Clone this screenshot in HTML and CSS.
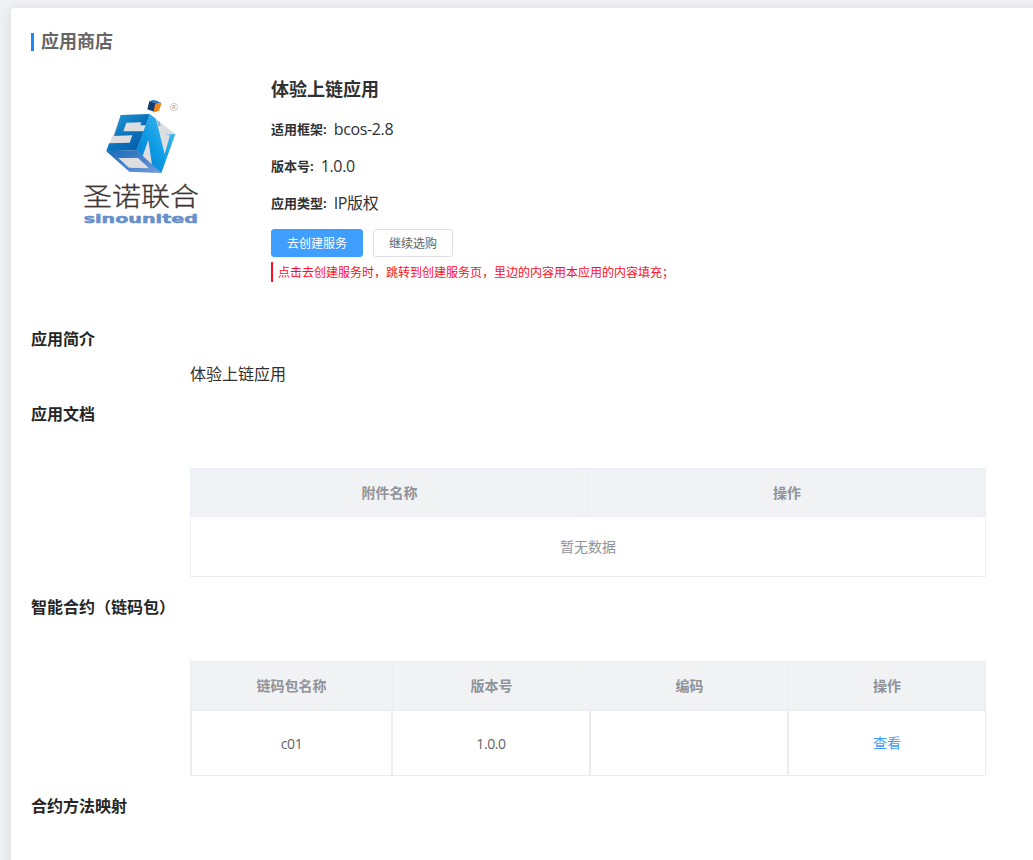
FILE: index.html
```html
<!DOCTYPE html>
<html lang="zh-CN">
<head>
<meta charset="utf-8">
<title>应用商店</title>
<link rel="stylesheet" href="styles.css">
</head>
<body>
<main class="card">
  <h1 class="page-title">应用商店</h1>
  <section class="app">
    <div class="app-logo">
      <svg width="140" height="145" viewBox="0 0 420 435" role="img" aria-label="sinounited">
        <defs>
          <linearGradient id="left" x1="0" y1="0" x2="1" y2="1">
            <stop offset="0" stop-color="#2aa0dc"/><stop offset=".5" stop-color="#0a73bd"/><stop offset="1" stop-color="#0757a0"/>
          </linearGradient>
          <linearGradient id="right" x1="1" y1="0" x2="0" y2="1">
            <stop offset="0" stop-color="#58c5f2"/><stop offset=".55" stop-color="#0e9be4"/><stop offset="1" stop-color="#0676ca"/>
          </linearGradient>
          <linearGradient id="base" x1="0" y1="0" x2="1" y2="1">
            <stop offset="0" stop-color="#1769b8"/><stop offset="1" stop-color="#739bdc"/>
          </linearGradient>
        </defs>
        <path fill="#dedee0" d="M154 75L239 72L262 91L316 132L274 249L178 245L109 184Z"/>
        <path fill="url(#left)" d="M152 75L239 72L228 106L211 106L214 97L169 98L160 124L222 124L200 181L109 184L117 160L179 158L187 136L132 138Z"/>
        <path fill="url(#base)" d="M109 184L200 181L274 249L178 245ZM145 204L177 233L237 235L204 204Z" fill-rule="evenodd"/>
        <path fill="url(#right)" d="M239 72L258 86L284 192L300 136L284 134L316 132L274 249L246 224L235 150L218 198L200 181Z"/>
        <path fill="#8db7dc" d="M262 91L269 95L273 107L265 109Z"/>
        <path fill="#123d75" d="M238 34L264 32L254 66L232 58Z"/>
        <path fill="#2f75b7" d="M238 34L250 29L274 39L257 41Z"/>
        <path fill="#f08418" d="M256 41L275 38L267 62L249 68Z"/>
        <circle cx="312" cy="51" r="11" fill="none" stroke="#aaa" stroke-width="1.8"/>
        <text class="logo-mark" x="307" y="57">R</text>
        <text class="logo-cn" transform="translate(39 348) scale(1 .9)" textLength="348">圣诺联合</text>
        <text class="logo-en" x="41" y="399" textLength="343" lengthAdjust="spacingAndGlyphs">sinounited</text>
      </svg>
    </div>
    <div class="app-info">
      <h2 class="app-name">体验上链应用</h2>
      <p class="field"><span class="field-label">适用框架:</span><span class="field-value">bcos-2.8</span></p>
      <p class="field"><span class="field-label">版本号:</span><span class="field-value">1.0.0</span></p>
      <p class="field"><span class="field-label">应用类型:</span><span class="field-value">IP版权</span></p>
      <div class="actions">
        <button class="btn btn-primary">去创建服务</button>
        <button class="btn">继续选购</button>
      </div>
      <p class="note">点击去创建服务时，跳转到创建服务页，里边的内容用本应用的内容填充；</p>
    </div>
  </section>

  <h3 class="heading">应用简介</h3>
  <p class="intro">体验上链应用</p>

  <h3 class="heading">应用文档</h3>
  <div class="table docs">
    <div class="row head"><div class="cell">附件名称</div><div class="cell">操作</div></div>
    <div class="empty">暂无数据</div>
  </div>

  <h3 class="heading">智能合约（链码包）</h3>
  <div class="table contracts">
    <div class="row head"><div class="cell">链码包名称</div><div class="cell">版本号</div><div class="cell">编码</div><div class="cell">操作</div></div>
    <div class="row body"><div class="cell">c01</div><div class="cell">1.0.0</div><div class="cell"></div><div class="cell"><a class="link">查看</a></div></div>
  </div>

  <h3 class="heading">合约方法映射</h3>
</main>
</body>
</html>
```
FILE: styles.css
```css
* { box-sizing: border-box; }
html, body { height: 100%; }
body {
  margin: 0;
  padding: 8px 0 0 11px;
  overflow: hidden;
  background: #eff0f4;
  color: #303133;
  font-family: "Open Sans", "Noto Sans CJK SC", sans-serif;
  font-size: 16px;
}
h1, h2, h3, p { margin: 0; }
.card {
  width: 1040px;
  height: 880px;
  padding: 25px 0 0 20px;
  background: #fff;
  border-radius: 4px;
  box-shadow: 0 2px 12px rgba(0, 0, 0, .1);
}
.page-title {
  height: 18px;
  padding-left: 7px;
  border-left: 3px solid #1e88ff;
  color: #666;
  font-size: 18px;
  line-height: 16px;
}
.app { display: flex; height: 270px; padding-top: 26px; }
.app-logo { width: 240px; padding: 13px 0 0 39px; }
.app-logo svg { display: block; }
.logo-cn { font: 300 87px "Noto Sans CJK SC", sans-serif; fill: #3e3533; stroke: #3e3533; stroke-width: 1; }
.logo-en { font: 700 38px "DejaVu Sans", sans-serif; fill: #6690cc; stroke: #6690cc; stroke-width: 1.5; }
.logo-mark { font: 14px "Liberation Sans", sans-serif; fill: #888; }
.app-name { height: 33px; font-size: 18px; line-height: 24px; }
.field { display: flex; align-items: center; gap: 7px; height: 37px; }
.field-label { font-size: 13px; font-weight: 700; }
.field-value { font-size: 16px; line-height: 24px; letter-spacing: -.35px; }
.actions { display: flex; gap: 10px; margin-top: 8px; }
.btn {
  height: 28px;
  padding: 0 15px;
  border: 1px solid #dcdfe6;
  border-radius: 3px;
  background: #fff;
  color: #606266;
  font: 12px/26px "Noto Sans CJK SC", sans-serif;
}
.btn-primary { border-color: #409eff; background: #409eff; color: #fff; }
.note {
  height: 20px;
  margin-top: 5px;
  padding-left: 5px;
  border-left: 2px solid #ff0d26;
  color: #ff0d26;
  font-size: 12px;
  line-height: 22px;
  white-space: nowrap;
}
.heading { height: 36px; color: #252525; font-size: 16px; line-height: 36px; }
.intro { height: 39px; padding-left: 159px; line-height: 34px; }
.table {
  width: 796px;
  margin: 36px 0 0 159px;
  border: 1px solid #ebeef5;
  color: #606266;
  font-size: 14px;
}
.row { display: grid; }
.docs .row { grid-template-columns: 398px 1fr; }
.contracts .row { grid-template-columns: 202px 198px 198px 1fr; }
.cell { display: flex; align-items: center; justify-content: center; border-right: 1px solid #ebeef5; }
.cell:last-child { border-right: 0; }
.head { height: 48px; background: #f0f2f4; border-bottom: 1px solid #ebeef5; color: #909399; font-weight: 700; }
.head .cell { padding-bottom: 2px; }
.empty { height: 59px; color: #909399; line-height: 59px; text-align: center; }
.docs { height: 109px; margin-bottom: 12px; }
.contracts { height: 115px; margin-bottom: 12px; border-color: #ebecf2; }
.contracts .head { height: 49px; border-bottom-width: 2px; }
.body { height: 64px; letter-spacing: -.4px; }
.body .cell { border-right: 2px solid #ebecf2; }
.body .cell:first-child { border-left: 1px solid #ebecf2; }
.body .cell:last-child { border-right: 0; padding-bottom: 2px; }
.link { color: #409eff; letter-spacing: 0; }
```
